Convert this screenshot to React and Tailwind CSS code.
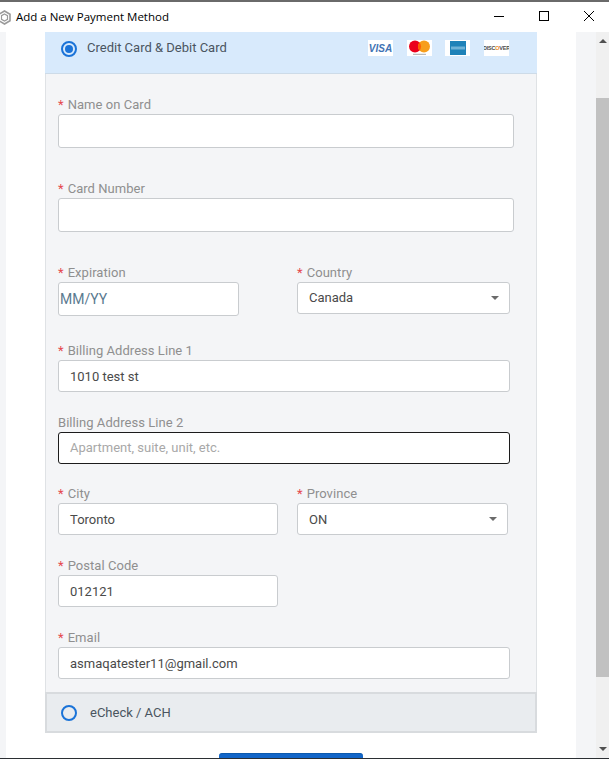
import React from "react";

const Label = ({ children, required }) => (
  <label className="block text-[13px] leading-[16px] text-[#8f8f8f] tracking-[0.05px]">
    {required && <span className="text-[#e5484d] mr-1">*</span>}
    {children}
  </label>
);

const Field = ({ label, required, value, placeholder, className, focused, tall }) => (
  <div className={className}>
    <Label required={required}>{label}</Label>
    <div
      className={
        "mt-[1px] bg-white rounded-[3px] border flex items-center px-[11px] text-[13px] " +
        (tall ? "h-[34px] " : "h-[32px] ") +
        (focused ? "border-[#1c1c1c] text-[#a8a8a8]" : "border-[#c9cccf] text-[#4a4a4a] pt-[2px]")
      }
    >
      {value || placeholder}
    </div>
  </div>
);

const SelectField = ({ label, value, className, low }) => (
  <div className={className}>
    <Label required>{label}</Label>
    <div className="mt-[1px] h-[32px] bg-white rounded-[3px] border border-[#c9cccf] flex items-center justify-between pl-[11px] pr-[10px] text-[13px] text-[#4a4a4a]">
      <span className={low ? "pt-[2px]" : ""}>{value}</span>
      <span className="w-0 h-0 border-x-[4px] border-x-transparent border-t-[4px] border-t-[#6b6b6b]" />
    </div>
  </div>
);

const Visa = () => (
  <div className="w-[25px] h-[16px] bg-white flex items-center justify-center text-[10px] font-bold italic text-[#3f73b4] font-['Liberation_Sans',sans-serif]">
    VISA
  </div>
);

const Mastercard = () => (
  <svg width="25" height="16" viewBox="0 0 25 16">
    <rect width="25" height="16" fill="#fff" />
    <circle cx="8" cy="6.500" r="6" fill="#eb001b" />
    <circle cx="17" cy="6.500" r="6" fill="#f79e1b" />
    <path d="M12.500 2.500a6 6 0 0 1 0 8a6 6 0 0 1 0-8z" fill="#ff5f00" />
    <rect x="6" y="13.800" width="13" height="1" fill="#aaa" />
  </svg>
);

const Amex = () => (
  <svg width="25" height="16" viewBox="0 0 25 16">
    <rect width="25" height="16" fill="#fff" />
    <rect x="5" y="1" width="16" height="14" fill="#1f82b8" />
    <rect x="6" y="6.500" width="14" height="3" fill="#6fb2d6" />
  </svg>
);

const Discover = () => (
  <div className="w-[25px] h-[16px] bg-white flex items-center justify-center overflow-hidden text-[5.500px] font-bold tracking-[-0.2px] text-[#4a4a4a] font-['Liberation_Sans',sans-serif]">
    DISC<span className="text-[#f08a24]">O</span>VER
  </div>
);

export default function App() {
  return (
    <div className="w-[609px] h-[759px] overflow-hidden bg-white flex flex-col font-['Roboto',sans-serif]">
      {/* Title bar */}
      <div className="h-[32px] shrink-0 border-t-2 border-[#6a6a6a] flex items-center justify-between">
        <div className="flex items-center">
          <svg width="13" height="15" viewBox="0 0 13 15" className="-ml-[2px] mr-[5px]" fill="none" stroke="#9a9a9a">
            <path d="M6.500 1l5.500 3.200v6.600l-5.500 3.200-5.500-3.200V4.200z" strokeWidth="1.600" />
            <path d="M6.500 4l3 1.700v3.600l-3 1.700-3-1.700V5.700z" strokeWidth="1.200" />
          </svg>
          <span className="text-[11.500px] text-black font-['Open_Sans',sans-serif]">Add a New Payment Method</span>
        </div>
        <div className="flex items-center gap-[35px] pr-[15px] -mt-[2px]">
          <svg width="10" height="10" viewBox="0 0 10 10" stroke="#000" strokeWidth="1">
            <path d="M0 5.500h10" />
          </svg>
          <svg width="10" height="10" viewBox="0 0 10 10" fill="none" stroke="#000" strokeWidth="1">
            <rect x="0.500" y="0.500" width="9" height="9" />
          </svg>
          <svg width="10" height="10" viewBox="0 0 10 10" stroke="#000" strokeWidth="1">
            <path d="M0 0l10 10M10 0L0 10" />
          </svg>
        </div>
      </div>

      <div className="flex-1 min-h-0 flex">
        {/* Page */}
        <div className="flex-1 min-w-0 flex">
          <div className="w-[6px] bg-[#f4f5f7]" />
          <div className="flex-1 min-w-0 bg-white pl-[39px] pr-[39px]">
            <div className="w-[492px] bg-[#f4f5f7] border-x border-[#dfe2e5]">
              <div className="h-[42px] -mx-[1px] bg-[#d8eafc] border-b border-[#cddbe8] flex items-start justify-between pl-[16px] pr-[28px] pt-[8px]">
                <div className="flex items-center gap-[10px]">
                  <span className="w-[16px] h-[16px] rounded-full border-2 border-[#1a73d8] flex items-center justify-center">
                    <span className="w-[8px] h-[8px] rounded-full bg-[#1a73d8]" />
                  </span>
                  <span className="text-[13px] leading-[15px] pb-[2px] text-[#4a5560]">Credit Card &amp; Debit Card</span>
                </div>
                <div className="flex items-center gap-[13.670px]">
                  <Visa />
                  <Mastercard />
                  <Amex />
                  <Discover />
                </div>
              </div>

              <div className="pl-[12px] pt-[23px] pb-[13px]">
                <Field required tall label="Name on Card" className="w-[456px]" />
                <Field required tall label="Card Number" className="w-[456px] mt-[33px]" />
                <div className="flex items-start mt-[33px]">
                  <div className="w-[181px]">
                    <Label required>Expiration</Label>
                    <div className="mt-[1px] h-[34px] bg-white rounded-[3px] border border-[#c9cccf] flex items-center pl-[1px] pr-[2px] text-[14px] text-[#5a7a90]">
                      MM/YY
                    </div>
                  </div>
                  <SelectField label="Country" value="Canada" className="w-[213px] ml-[58px]" />
                </div>
                <Field required label="Billing Address Line 1" value="1010 test st" className="w-[452px] mt-[27px]" />
                <Field label="Billing Address Line 2" placeholder="Apartment, suite, unit, etc." className="w-[452px] mt-[23px]" focused />
                <div className="flex mt-[22px]">
                  <Field required label="City" value="Toronto" className="w-[220px]" />
                  <SelectField low label="Province" value="ON" className="w-[211px] ml-[19px]" />
                </div>
                <Field required label="Postal Code" value="012121" className="w-[220px] mt-[23px]" />
                <Field required label="Email" value="asmaqatester11@gmail.com" className="w-[452px] mt-[23px]" />
              </div>

              <div className="h-[41px] -mx-[1px] bg-[#e9ecef] border-2 border-[#d8dbde] flex items-center pl-[14px] gap-[13px]">
                <span className="w-[16px] h-[16px] rounded-full border-2 border-[#1a73d8]" />
                <span className="text-[13px] text-[#4a5560]">eCheck / ACH</span>
              </div>
            </div>
            <div className="mt-[20px] ml-[174px] w-[144px] h-[20px] bg-[#1266c9] border-t border-[#0d5aae] rounded-t-[3px]" />
          </div>
          <div className="w-[20px] bg-[#f4f5f7]" />
        </div>

        {/* Scrollbar */}
        <div className="w-[13px] bg-[#f0f0f0] flex flex-col items-center relative">
          <span className="absolute top-[7px] w-0 h-0 border-x-[4px] border-x-transparent border-b-[4px] border-b-[#505050]" />
          <div className="absolute top-[66px] w-full h-[579px] bg-[#c1c1c1]" />
          <span className="absolute bottom-[7px] w-0 h-0 border-x-[4px] border-x-transparent border-t-[4px] border-t-[#505050]" />
        </div>
      </div>
      <div className="h-[1px] bg-[#2b2f33] shrink-0" />
    </div>
  );
}
